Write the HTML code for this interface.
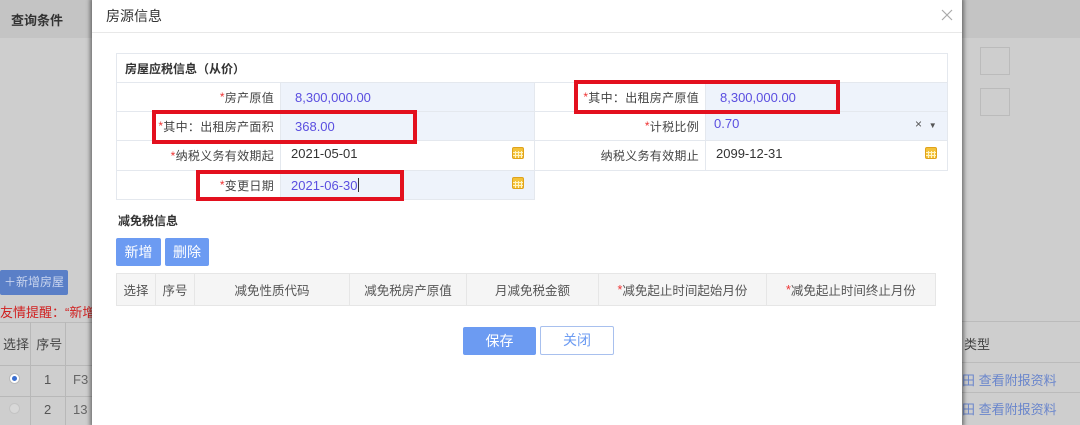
<!DOCTYPE html>
<html><head><meta charset="utf-8"><style>
*{margin:0;padding:0;box-sizing:border-box}
body{width:1080px;height:425px;overflow:hidden;background:#cecece;font-family:"Liberation Sans","Noto Sans CJK SC",sans-serif;font-size:13px;color:#333;position:relative}
.a{position:absolute}
.red{color:#e33}
.cal{position:absolute;width:12px;height:12px;background:#f3c23a;border:1px solid #e0a21a;border-radius:2px;
background-image:linear-gradient(#f3c23a 0 3px,transparent 3px),repeating-linear-gradient(90deg,transparent 0 2px,#fff3c4 2px 3px),repeating-linear-gradient(0deg,transparent 0 2px,#fff3c4 2px 3px)}
.rb{position:absolute;border:4px solid #e3101e}
.cell{position:absolute;border:1px solid #e4e8ee;display:flex;align-items:center}
.lab{justify-content:flex-end;padding-right:6px;font-size:12px;letter-spacing:.3px;color:#444}
.val{padding-left:14px;color:#5a4ee0;font-size:13px}
.blue{background:#eef3fb}
.th{position:absolute;top:273px;height:33px;border:1px solid #e6e6e6;background:#f5f5f5;display:flex;align-items:center;justify-content:center;color:#555;font-size:12.5px}
</style></head><body>
<div class="a" style="left:0;top:0;width:1080px;height:38px;background:#c4c4c4"></div>
<div class="a" style="left:11px;top:10px;font-weight:bold;font-size:13px;color:#333">查询条件</div>
<div class="a" style="left:980px;top:47px;width:30px;height:28px;border:1px solid #bbb"></div>
<div class="a" style="left:980px;top:88px;width:30px;height:28px;border:1px solid #bbb"></div>
<div class="a" style="left:0;top:270px;width:68px;height:25px;background:#5a7fc7;color:#c8d4ee;font-size:12px;line-height:25px;padding-left:4px;border-radius:2px">＋新增房屋</div>
<div class="a" style="left:0;top:302px;color:#d02020;font-size:13px">友情提醒：“新增</div>
<div class="a" style="left:0;top:322px;width:92px;height:103px;border-top:1px solid #bbb"></div>
<div class="a" style="left:30px;top:322px;width:1px;height:103px;background:#b8b8b8"></div>
<div class="a" style="left:65px;top:322px;width:1px;height:103px;background:#b8b8b8"></div>
<div class="a" style="left:0;top:365px;width:92px;height:1px;background:#b8b8b8"></div>
<div class="a" style="left:0;top:396px;width:92px;height:1px;background:#b8b8b8"></div>
<div class="a" style="left:3px;top:334px;font-size:13px;color:#444">选择&nbsp;&nbsp;序号</div>
<div class="a" style="left:9px;top:373px;width:11px;height:11px;border-radius:50%;background:#fff;border:1px solid #bbb"><div style="margin:2px;width:5px;height:5px;border-radius:50%;background:#3b6fd0"></div></div>
<div class="a" style="left:9px;top:403px;width:11px;height:11px;border-radius:50%;border:1px solid #c4c4c4;background:#d8d8d8"></div>
<div class="a" style="left:44px;top:372px;color:#555">1</div>
<div class="a" style="left:44px;top:402px;color:#555">2</div>
<div class="a" style="left:73px;top:372px;color:#666">F3</div>
<div class="a" style="left:73px;top:402px;color:#666">13</div>
<div class="a" style="left:962px;top:321px;width:118px;height:1px;background:#bbb"></div>
<div class="a" style="left:962px;top:362px;width:118px;height:1px;background:#bbb"></div>
<div class="a" style="left:962px;top:392px;width:118px;height:1px;background:#bbb"></div>
<div class="a" style="left:964px;top:334px;color:#444">类型</div>
<div class="a" style="left:962px;top:370px;color:#6a86cc;font-size:13px">田 查看附报资料</div>
<div class="a" style="left:962px;top:399px;color:#6a86cc;font-size:13px">田 查看附报资料</div>
<div class="a" style="left:92px;top:0;width:870px;height:425px;background:#fff;box-shadow:0 0 4px 2px rgba(0,0,0,.45)"></div>
<div class="a" style="left:106px;top:6px;font-size:14px;color:#333">房源信息</div>
<div class="a" style="left:92px;top:32px;width:870px;height:1px;background:#e8e8e8"></div>
<svg class="a" style="left:941px;top:9px" width="12" height="12" viewBox="0 0 12 12"><path d="M1 1L11 11M11 1L1 11" stroke="#aaa" stroke-width="1.2"/></svg>
<div class="cell" style="left:116px;top:53px;width:832px;height:30px;padding-left:8px;font-weight:bold;font-size:12px;color:#333">房屋应税信息（从价）</div>
<div class="cell lab" style="left:116px;top:82px;width:165px;height:30px"><span class="red">*</span>房产原值</div>
<div class="cell val blue" style="left:280px;top:82px;width:255px;height:30px">8,300,000.00</div>
<div class="cell lab" style="left:534px;top:82px;width:172px;height:30px"><span class="red">*</span>其中：出租房产原值</div>
<div class="cell val blue" style="left:705px;top:82px;width:243px;height:30px">8,300,000.00</div>
<div class="cell lab" style="left:116px;top:111px;width:165px;height:30px"><span class="red">*</span>其中：出租房产面积</div>
<div class="cell val blue" style="left:280px;top:111px;width:255px;height:30px">368.00</div>
<div class="cell lab" style="left:534px;top:111px;width:172px;height:30px"><span class="red">*</span>计税比例</div>
<div class="cell val blue" style="left:705px;top:111px;width:243px;height:30px;padding-left:8px;align-items:flex-start;padding-top:4px">0.70</div>
<div class="a" style="left:915px;top:117px;font-size:12px;color:#555">×&nbsp;&nbsp;<span style="font-size:8px">▼</span></div>
<div class="cell lab" style="left:116px;top:140px;width:165px;height:31px"><span class="red">*</span>纳税义务有效期起</div>
<div class="cell" style="left:280px;top:140px;width:255px;height:31px;padding-left:10px;align-items:flex-start;padding-top:5px;color:#333">2021-05-01</div>
<div class="cell lab" style="left:534px;top:140px;width:172px;height:31px">纳税义务有效期止</div>
<div class="cell" style="left:705px;top:140px;width:243px;height:31px;padding-left:10px;align-items:flex-start;padding-top:5px;color:#333">2099-12-31</div>
<div class="cell lab" style="left:116px;top:170px;width:165px;height:30px"><span class="red">*</span>变更日期</div>
<div class="cell val blue" style="left:280px;top:170px;width:255px;height:30px;padding-left:10px">2021-06-30<span style="display:inline-block;width:1px;height:14px;background:#333"></span></div>
<div class="cal" style="left:512px;top:147px"></div>
<div class="cal" style="left:512px;top:177px"></div>
<div class="cal" style="left:925px;top:147px"></div>
<div class="rb" style="left:152px;top:110px;width:265px;height:34px"></div>
<div class="rb" style="left:574px;top:80px;width:266px;height:34px"></div>
<div class="rb" style="left:196px;top:170px;width:208px;height:31px"></div>
<div class="a" style="left:118px;top:212px;font-weight:bold;font-size:12px;color:#333">减免税信息</div>
<div class="a" style="left:116px;top:238px;width:45px;height:28px;background:#6c9bf2;color:#fff;font-size:14px;line-height:28px;text-align:center;border-radius:2px">新增</div>
<div class="a" style="left:165px;top:238px;width:44px;height:28px;background:#6c9bf2;color:#fff;font-size:14px;line-height:28px;text-align:center;border-radius:2px">删除</div>
<div class="th" style="left:116px;width:40px">选择</div>
<div class="th" style="left:155px;width:40px">序号</div>
<div class="th" style="left:194px;width:156px">减免性质代码</div>
<div class="th" style="left:349px;width:118px">减免税房产原值</div>
<div class="th" style="left:466px;width:133px">月减免税金额</div>
<div class="th" style="left:598px;width:169px"><span class="red">*</span>减免起止时间起始月份</div>
<div class="th" style="left:766px;width:170px"><span class="red">*</span>减免起止时间终止月份</div>
<div class="a" style="left:463px;top:327px;width:73px;height:28px;background:#6c9bf2;color:#fff;font-size:14px;line-height:28px;text-align:center;border-radius:2px">保存</div>
<div class="a" style="left:540px;top:326px;width:74px;height:29px;border:1px solid #a8c0ee;color:#6c9bf2;font-size:14px;line-height:27px;text-align:center;border-radius:2px">关闭</div>
</body></html>
